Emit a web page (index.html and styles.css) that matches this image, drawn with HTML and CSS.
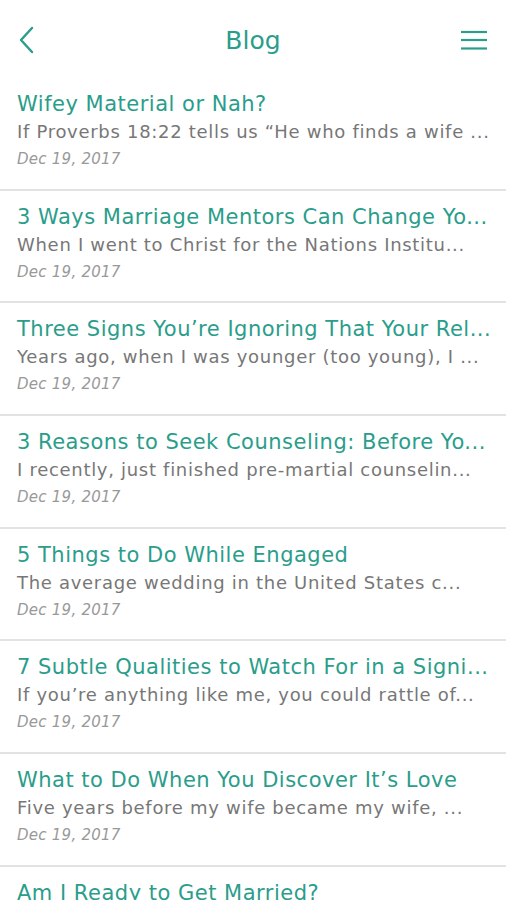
FILE: index.html
```html
<!DOCTYPE html>
<html lang="en">
<head>
<meta charset="utf-8">
<title>Blog</title>
<link rel="stylesheet" href="styles.css">
</head>
<body>
<div class="screen">
<header class="topbar">
  <svg class="icon back" width="20" height="28" viewBox="0 0 20 28"><polyline points="14,2 3,14 14,26" fill="none" stroke="#2a9d8b" stroke-width="2.4" stroke-linecap="round" stroke-linejoin="round"/></svg>
  <h1 class="title">Blog</h1>
  <svg class="icon menu" width="28" height="22" viewBox="0 0 28 22"><g stroke="#2a9d8b" stroke-width="2.2"><line x1="1" y1="3" x2="27" y2="3"/><line x1="1" y1="11" x2="27" y2="11"/><line x1="1" y1="19.5" x2="27" y2="19.5"/></g></svg>
</header>
<ul class="posts">
  <li class="post"><div class="post-title">Wifey Material or Nah?</div><div class="post-excerpt">If Proverbs 18:22 tells us “He who finds a wife ...</div><div class="post-date">Dec 19, 2017</div></li>
  <li class="post"><div class="post-title">3 Ways Marriage Mentors Can Change Yo...</div><div class="post-excerpt">When I went to Christ for the Nations Institu...</div><div class="post-date">Dec 19, 2017</div></li>
  <li class="post"><div class="post-title">Three Signs You’re Ignoring That Your Rel...</div><div class="post-excerpt">Years ago, when I was younger (too young), I ...</div><div class="post-date">Dec 19, 2017</div></li>
  <li class="post"><div class="post-title">3 Reasons to Seek Counseling: Before Yo...</div><div class="post-excerpt">I recently, just finished pre-martial counselin...</div><div class="post-date">Dec 19, 2017</div></li>
  <li class="post"><div class="post-title">5 Things to Do While Engaged</div><div class="post-excerpt">The average wedding in the United States c...</div><div class="post-date">Dec 19, 2017</div></li>
  <li class="post"><div class="post-title">7 Subtle Qualities to Watch For in a Signi...</div><div class="post-excerpt">If you’re anything like me, you could rattle of...</div><div class="post-date">Dec 19, 2017</div></li>
  <li class="post"><div class="post-title">What to Do When You Discover It’s Love</div><div class="post-excerpt">Five years before my wife became my wife, ...</div><div class="post-date">Dec 19, 2017</div></li>
  <li class="post post-last"><div class="post-title">Am I Ready to Get Married?</div></li>
</ul>
</div>
</body>
</html>
```
FILE: styles.css
```css
html, body {
  margin: 0;
  padding: 0;
  background: #fff;
}
body {
  font-family: "DejaVu Sans", "Noto Sans", sans-serif;
}
.screen {
  width: 506px;
  height: 900px;
  overflow: hidden;
}
.topbar {
  height: 78px;
  display: flex;
  align-items: center;
  justify-content: space-between;
  padding: 0 18px 0 18px;
  box-sizing: border-box;
  position: relative;
}
.icon { display: block; }
.back { margin-top: 2px; }
.menu { margin-top: 2px; }
.title {
  margin: 0;
  font-weight: normal;
  font-size: 25px;
  color: #2a9d8b;
  position: absolute;
  left: 0;
  right: 0;
  text-align: center;
  top: 25px;
  line-height: 32px;
  pointer-events: none;
}
.posts {
  list-style: none;
  margin: 0;
  padding: 0;
}
.post {
  height: 112.7px;
  box-sizing: border-box;
  padding: 12px 8px 0 17px;
  border-bottom: 2px solid #e2e2e2;
}
.post-last {
  border-bottom: none;
}
.post-title, .post-excerpt, .post-date {
  white-space: nowrap;
}
.post-title {
  font-size: 21px;
  letter-spacing: 0.5px;
  line-height: 28px;
  color: #2a9d8b;
}
.post-excerpt {
  font-size: 18px;
  letter-spacing: 0.7px;
  line-height: 28px;
  color: #777;
}
.post-date {
  font-size: 15px;
  letter-spacing: 0.25px;
  line-height: 26px;
  font-style: italic;
  color: #999;
}
```
